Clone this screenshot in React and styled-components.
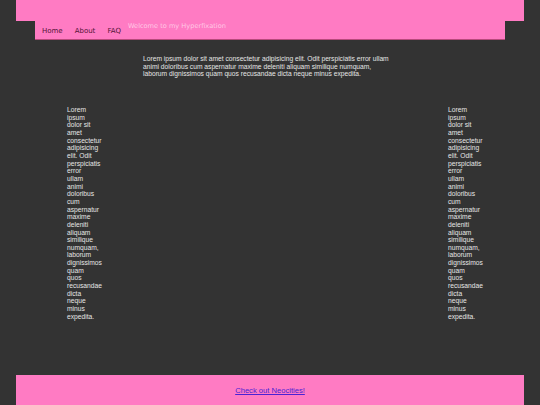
import styled, { createGlobalStyle } from 'styled-components';

const GlobalStyle = createGlobalStyle`
  html, body {
    margin: 0;
    padding: 0;
    background: #333333;
  }
  body {
    font-family: "Liberation Sans", Arial, sans-serif;
  }
`;

const lorem =
  'Lorem ipsum dolor sit amet consectetur adipisicing elit. Odit perspiciatis error ullam animi doloribus cum aspernatur maxime deleniti aliquam similique numquam, laborum dignissimos quam quos recusandae dicta neque minus expedita.';

export default function App() {
  return (
    <>
      <GlobalStyle />
      <Page>
        <Header>
          <TopBand />
          <Nav>
            <NavLink>Home</NavLink>
            <NavLink>About</NavLink>
            <NavLink>FAQ</NavLink>
            <Title>Welcome to my Hyperfixation</Title>
          </Nav>
        </Header>
        <Body>
          <Aside>{lorem}</Aside>
          <Main>{lorem}</Main>
          <Aside>{lorem}</Aside>
        </Body>
        <Footer>
          <a href="#">Check out Neocities!</a>
        </Footer>
      </Page>
    </>
  );
}

const Page = styled.div`
  width: 540px;
  height: 405px;
  overflow: hidden;
  display: flex;
  flex-direction: column;
  background: #333333;
`;

const Header = styled.header`
  padding: 0 16px;
`;

const TopBand = styled.div`
  height: 21px;
  background: #ff7bc3;
`;

const Nav = styled.nav`
  margin: 0 19px 0 19px;
  height: 18px;
  padding-left: 7px;
  display: flex;
  align-items: center;
  background: #ff7bc3;
  border-bottom: 1px solid #b8497c;
  font-family: "DejaVu Sans", Verdana, sans-serif;
`;

const NavLink = styled.span`
  font-size: 7px;
  color: #541437;
  margin-right: 12px;
  padding-top: 2px;
`;

const Title = styled.h1`
  margin: -9px 0 0 -5px;
  font-size: 6.6px;
  font-weight: normal;
  color: #ffc9e6;
`;

const Body = styled.main`
  flex: 1;
  display: flex;
  align-items: flex-start;
  gap: 46px;
  padding: 15px 0 0 67px;
  font-size: 6.7px;
  line-height: 7.65px;
  color: #e6e6e6;
`;

const Main = styled.p`
  width: 252px;
  margin: 0 7px 0 0;
`;

const Aside = styled.aside`
  width: 30px;
  flex: none;
  margin-top: 51px;
`;

const Footer = styled.footer`
  margin: 0 16px;
  height: 30px;
  padding-top: 11px;
  box-sizing: border-box;
  background: #ff7bc3;
  text-align: center;
  font-size: 7.6px;

  a {
    color: #4a22d4;
  }
`;
